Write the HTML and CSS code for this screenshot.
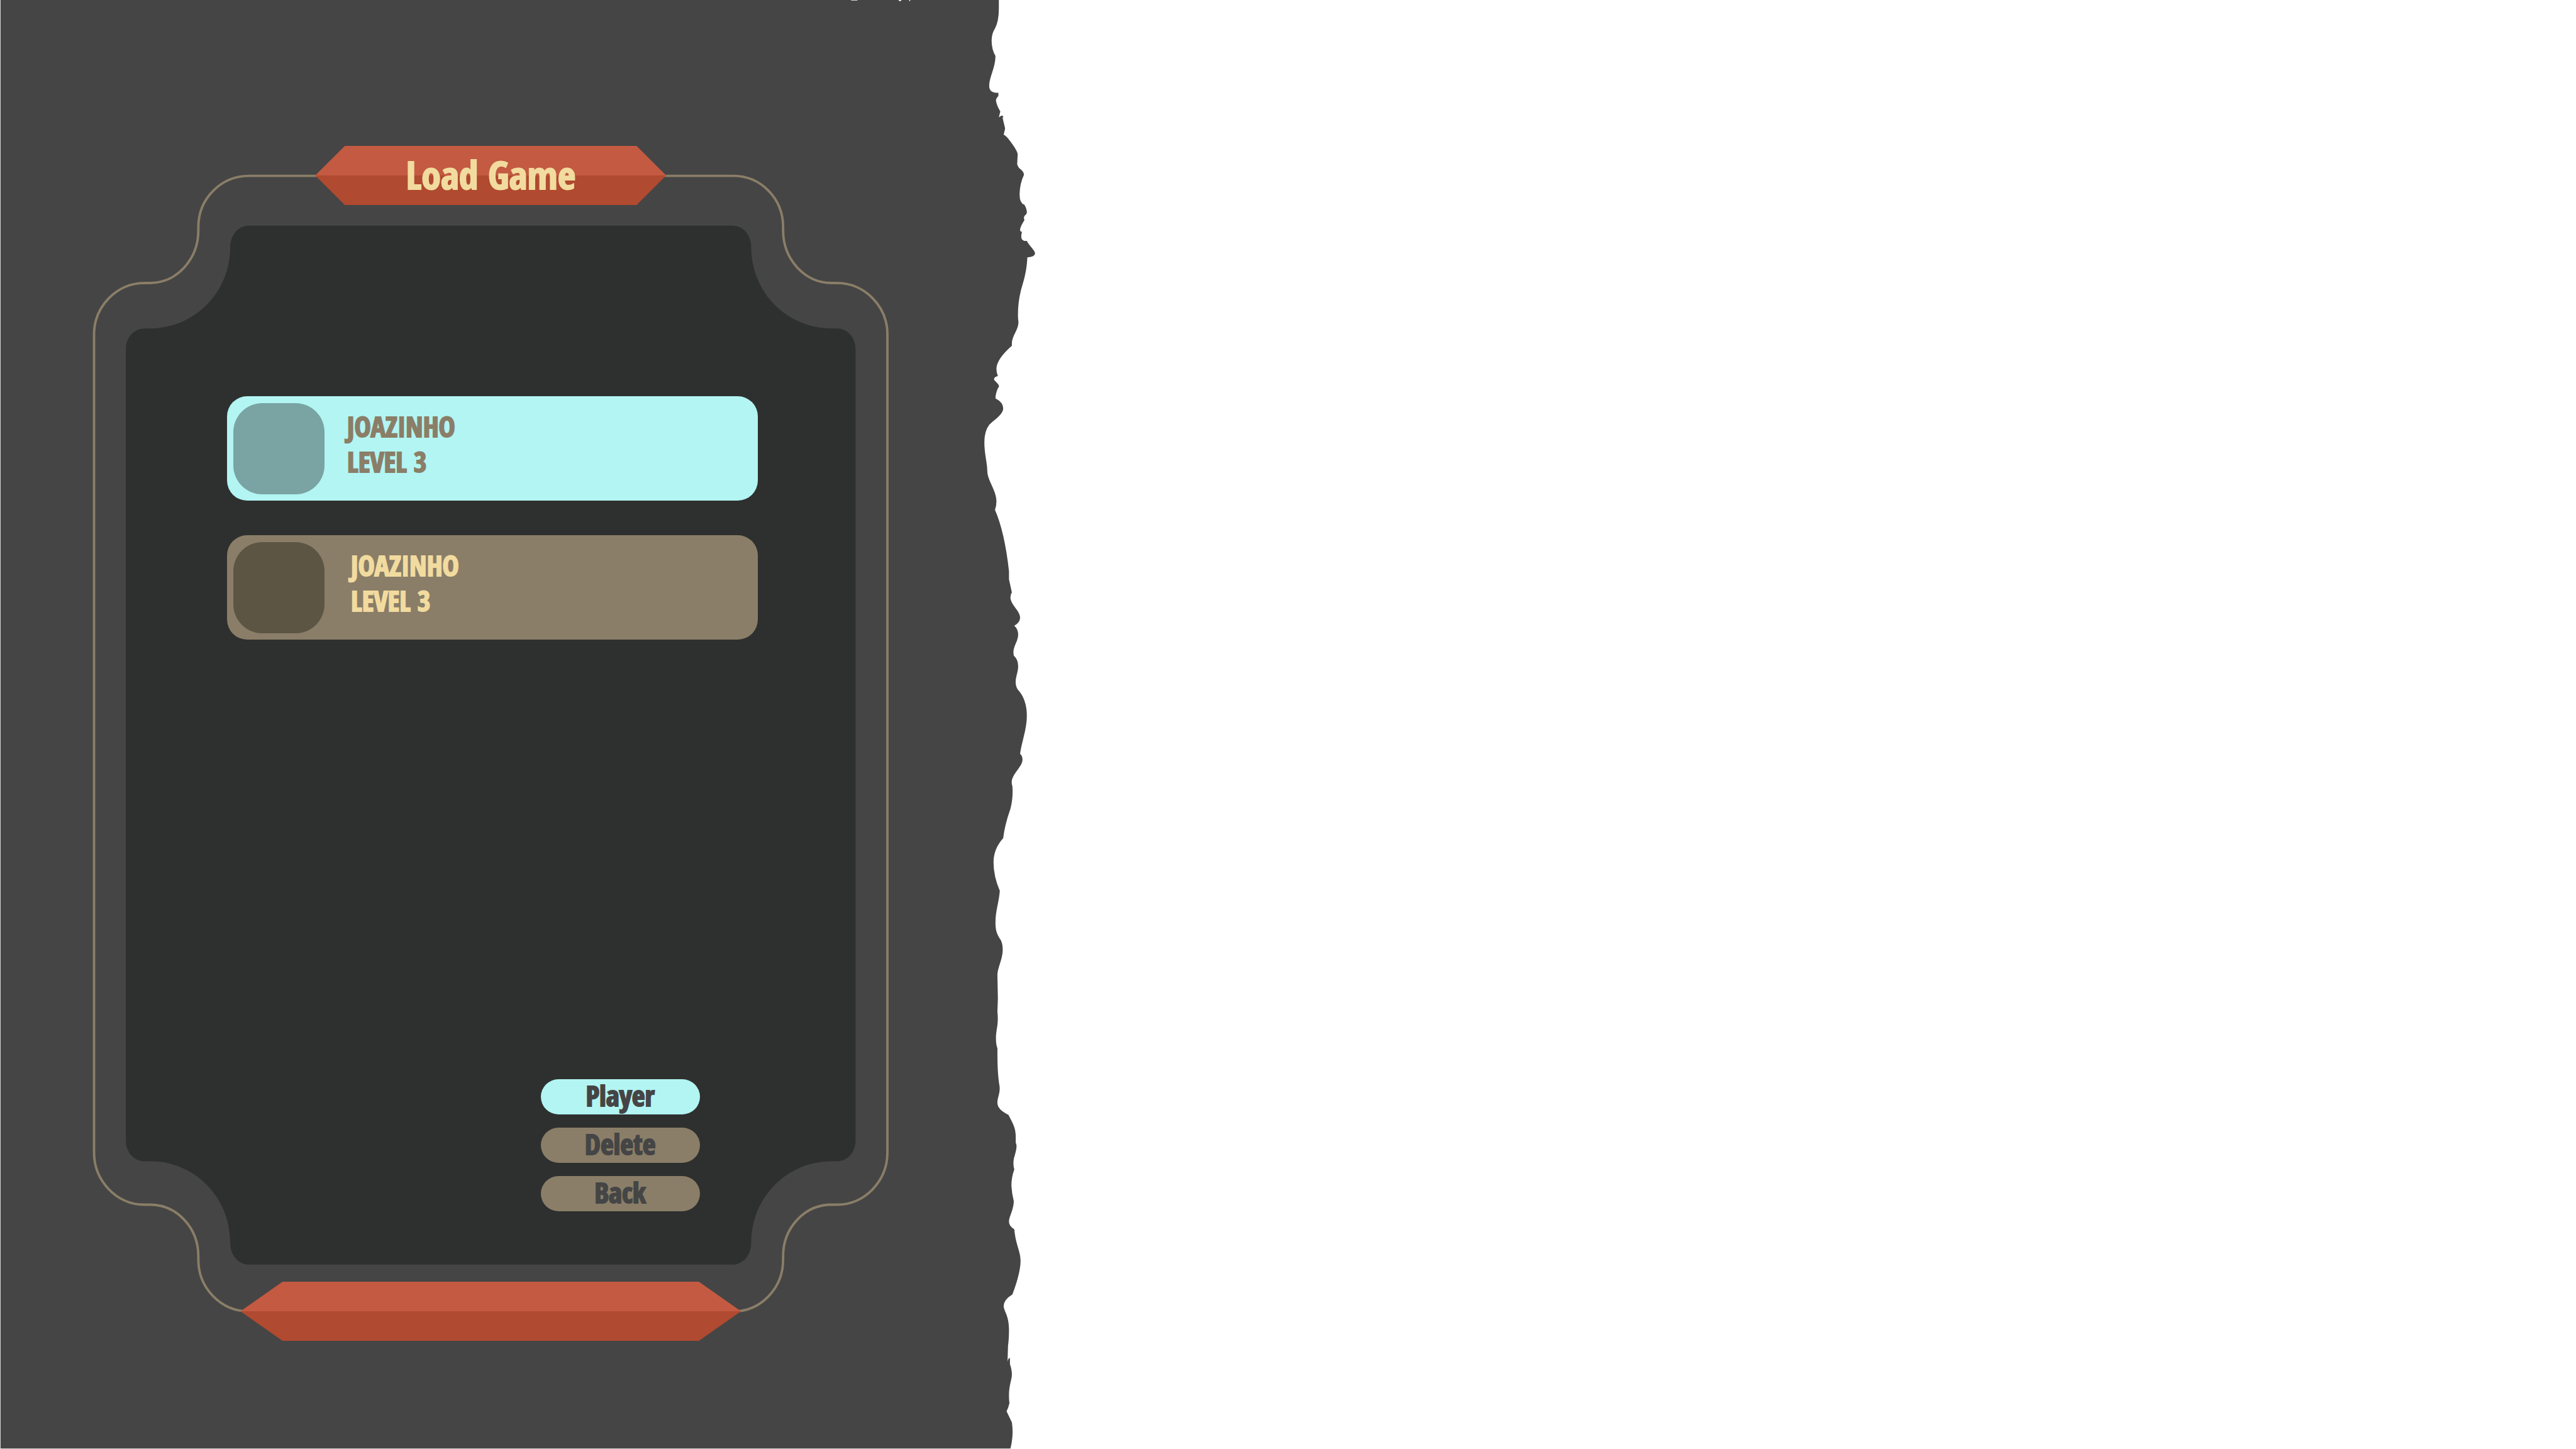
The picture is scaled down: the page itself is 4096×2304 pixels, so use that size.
FILE: index.html
```html
<!DOCTYPE html>
<html lang="en">
<head>
<meta charset="utf-8">
<title>Load Game</title>
<link rel="stylesheet" href="styles.css">
</head>
<body>
<main class="screen">
  <section class="paper">
    <svg class="paper-shape" viewBox="0 0 2145 3001" preserveAspectRatio="none" aria-hidden="true">
      <path fill="#454545" d="M1 0H2069V18Q2069 44 2061 59Q2054 70 2054 84Q2054 102 2062 116C2062 140 2049 160 2049 178Q2049 193 2068 192V199Q2063 204 2063 208Q2064 217 2072 231L2069 243Q2079 235 2078 245L2076 241L2082 266L2079 279Q2084 281 2090 289Q2107 311 2108 319L2107 340Q2108 345 2111 348Q2121 355 2121 362Q2112 381 2112 403Q2112 421 2122 424Q2127 433 2127 440C2127 446 2118 446 2122 456Q2113 470 2113 476Q2113 480 2117 480Q2111 501 2127 499C2131 508 2144 519 2144 525Q2144 532 2128 533C2127 560 2121 580 2115 600Q2107 632 2109 662C2113 680 2096 694 2096 711V716Q2064 744 2064 764Q2064 772 2067 779Q2059 781 2059 785C2059 790 2075 797 2067 804Q2062 816 2062 825Q2078 833 2078 846C2078 859 2056 872 2049 880Q2039 893 2039 916C2039 940 2045 959 2045 975C2045 995 2064 1016 2064 1038Q2064 1048 2061 1056Q2081 1102 2090 1183V1200L2096 1227Q2093 1231 2093 1237C2093 1252 2113 1265 2113 1279Q2113 1289 2101 1296Q2109 1303 2109 1314C2109 1330 2096 1340 2100 1358Q2109 1366 2109 1380C2109 1396 2098 1411 2108 1428Q2127 1448 2127 1483C2127 1510 2116 1538 2113 1561Q2118 1566 2118 1573C2118 1590 2089 1607 2097 1628Q2099 1652 2093 1675Q2081 1709 2078 1736Q2058 1758 2058 1786Q2058 1815 2071 1845C2069 1870 2062 1886 2062 1911C2062 1932 2068 1938 2073 1947Q2077 1955 2077 1967C2077 1987 2066 2004 2066 2020L2067 2068L2066 2095C2069 2122 2063 2132 2063 2150Q2063 2163 2066 2171C2066 2207 2067 2226 2070 2247C2073 2262 2066 2272 2066 2284Q2066 2298 2089 2309C2097 2326 2104 2334 2104 2355V2367C2108 2374 2104 2385 2100 2400Q2098 2413 2101 2422Q2095 2438 2095 2456Q2096 2472 2100 2488C2099 2508 2090 2519 2090 2530Q2090 2539 2101 2546C2104 2579 2114 2591 2114 2611Q2114 2636 2097 2681Q2079 2692 2079 2705C2079 2715 2090 2724 2090 2753Q2090 2774 2088 2787L2087 2820Q2089 2812 2092 2813V2825Q2096 2837 2096 2847C2096 2859 2087 2874 2091 2906Q2089 2915 2085 2923L2096 2946Q2100 2972 2093 3000H1Z"/>
      <path fill="#fff" d="M1763 0h13v1h-13zM1861 0h7l-4 3zM1883 0h3l-2 3z"/>
    </svg>
    <div class="frame">
      <svg class="frame-shape" viewBox="192 302 1647 2475" preserveAspectRatio="none" aria-hidden="true">
        <path fill="#2e302f" d="M515 467H1516C1538 467 1555 486 1555 512C1555 606 1630 680 1721 680H1733C1754 680 1771 699 1771 722V2363C1771 2386 1754 2405 1733 2405H1721C1630 2405 1555 2479 1555 2573C1555 2600 1538 2619 1516 2619H515C493 2619 476 2600 476 2573C476 2479 401 2405 310 2405H298C277 2405 260 2386 260 2363V722C260 699 277 680 298 680H310C401 680 476 606 476 512C476 486 493 467 515 467Z"/>
        <path fill="none" stroke="#8a7e68" stroke-width="5" d="M515 364H1518C1575 364 1621 411 1621 470V477C1621 537 1666 586 1721 586H1733C1790 586 1837 634 1837 693V2387C1837 2446 1790 2495 1733 2495H1721C1666 2495 1621 2542 1621 2602V2609C1621 2668 1575 2716 1518 2716H515C457 2716 410 2668 410 2609V2602C410 2542 365 2495 310 2495H298C241 2495 194 2446 194 2387V693C194 634 241 586 298 586H310C365 586 410 537 410 477V470C410 411 457 364 515 364Z"/>
      </svg>
      <h1 class="ribbon ribbon-title">Load Game</h1>
      <ul class="saves">
        <li><button class="save save-selected" type="button">
          <span class="avatar"></span>
          <span class="info"><span>JOAZINHO</span><span>LEVEL 3</span></span>
        </button></li>
        <li><button class="save" type="button">
          <span class="avatar"></span>
          <span class="info"><span>JOAZINHO</span><span>LEVEL 3</span></span>
        </button></li>
      </ul>
      <nav class="actions">
        <button class="action action-selected" type="button">Player</button>
        <button class="action" type="button">Delete</button>
        <button class="action" type="button">Back</button>
      </nav>
      <div class="ribbon ribbon-base"></div>
    </div>
  </section>
</main>
</body>
</html>
```
FILE: styles.css
```css
* {
  box-sizing: border-box;
}

body {
  margin: 0;
  background: #fff;
  font-family: "Open Sans Condensed", "Liberation Sans Narrow", "Roboto Condensed", Lato, sans-serif;
  font-weight: 700;
  -webkit-text-stroke: 2px currentColor;
}

button {
  border: 0;
  padding: 0;
  font: inherit;
  cursor: pointer;
}

.screen {
  display: flex;
  min-height: 100vh;
}

.paper {
  position: relative;
  display: flex;
  width: 40.2%;
  padding: 232px 234px 172px 148px;
}

.paper-shape,
.frame-shape {
  position: absolute;
  inset: 0;
  width: 100%;
  height: 100%;
}

.frame-shape {
  overflow: visible;
}

.frame {
  position: relative;
  display: flex;
  flex: 1;
  flex-direction: column;
}

.ribbon {
  --point: 47px;
  position: relative;
  align-self: center;
  height: 94px;
  margin: 0;
  background: linear-gradient(#c35a41 50%, #b04a30 50%);
  clip-path: polygon(0 50%, var(--point) 0, calc(100% - var(--point)) 0, 100% 50%, calc(100% - var(--point)) 100%, var(--point) 100%);
}

.ribbon-title {
  width: 558px;
  color: #f2db9f;
  font-size: 62px;
  line-height: 90px;
  text-align: center;
}

.ribbon-base {
  --point: 67px;
  width: 796px;
}

.saves {
  position: relative;
  display: flex;
  flex-direction: column;
  gap: 55px;
  margin: 304px 208px 0 213px;
  padding: 0;
  list-style: none;
}

.save {
  display: flex;
  align-items: center;
  gap: 42px;
  width: 100%;
  height: 166px;
  padding: 0 10px;
  border-radius: 32px;
  background: #8a7e68;
  color: #f2db9f;
  font-size: 44px;
  line-height: 56px;
  text-align: left;
}

.save-selected {
  gap: 36px;
  background: #b2f5f3;
  color: #8a7e68;
}

.avatar {
  width: 145px;
  height: 145px;
  border-radius: 46px;
  background: #5d5544;
}

.save-selected .avatar {
  background: #79a4a3;
}

.info {
  display: flex;
  flex-direction: column;
  padding-bottom: 14px;
}

.actions {
  position: relative;
  display: flex;
  flex-direction: column;
  align-self: flex-end;
  gap: 21px;
  width: 253px;
  margin: auto 300px 112px 0;
}

.action {
  height: 56px;
  padding-bottom: 4px;
  border-radius: 28px;
  background: #8a7e68;
  color: #454545;
  font-size: 45px;
  line-height: 52px;
}

.action-selected {
  background: #b2f5f3;
}
```
